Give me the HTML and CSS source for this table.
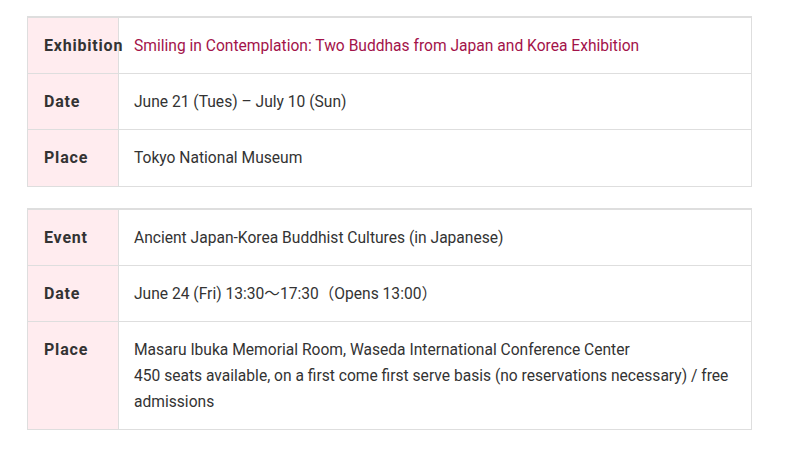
FILE: index.html
```html
<!DOCTYPE html>
<html lang="en">
<head>
<meta charset="utf-8">
<title>Exhibition info</title>
<link rel="stylesheet" href="styles.css">
</head>
<body>
<div class="wrap">
  <table class="info">
    <tr><th>Exhibition</th><td class="title">Smiling in Contemplation: Two Buddhas from Japan and Korea Exhibition</td></tr>
    <tr><th>Date</th><td>June 21 (Tues) – July 10 (Sun)</td></tr>
    <tr class="last"><th>Place</th><td>Tokyo National Museum</td></tr>
  </table>
  <table class="info">
    <tr><th>Event</th><td>Ancient Japan-Korea Buddhist Cultures (in Japanese)</td></tr>
    <tr><th>Date</th><td>June 24 (Fri) 13:30～17:30（Opens 13:00）</td></tr>
    <tr><th>Place</th><td>Masaru Ibuka Memorial Room, Waseda International Conference Center<br>450 seats available, on a first come first serve basis (no reservations necessary) / free admissions</td></tr>
  </table>
</div>
</body>
</html>
```
FILE: styles.css
```css
html, body { margin: 0; padding: 0; background: #fff; }
body {
  font-family: Roboto, "Noto Sans CJK JP", sans-serif;
  font-size: 15.6px;
  line-height: 26px;
  color: #333;
}
.wrap { padding: 16px 39px 0 27px; }
.info {
  width: 725px;
  border-collapse: collapse;
  border-top: 2px solid #dedede;
  margin-bottom: 21px;
  table-layout: fixed;
}
.info th, .info td {
  border: 1px solid #dedede;
  padding: 15px 15px 14px;
  text-align: left;
  vertical-align: top;
}
.info th {
  width: 59px;
  padding-left: 16px;
  background: #ffecef;
  font-size: 16px;
  letter-spacing: 0.8px;
  font-weight: bold;
  white-space: nowrap;
  overflow: visible;
  color: #333;
}
.info tr:first-child th, .info tr:first-child td { border-top: 2px solid #dedede; }
.info .last th, .info .last td { padding-bottom: 15px; }
.title { color: #a3134a; }
```
